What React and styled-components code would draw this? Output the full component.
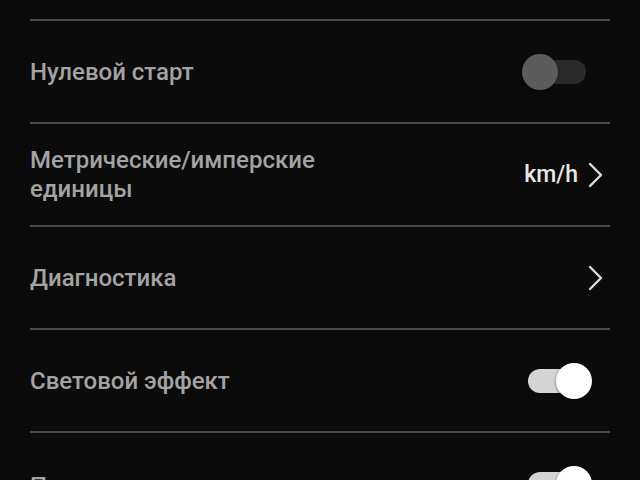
import React from "react";
import styled, { createGlobalStyle } from "styled-components";

const Global = createGlobalStyle`
  html, body { margin: 0; padding: 0; background: #0b0b0b; }
  body { font-family: Roboto, "Noto Sans", sans-serif; overflow: hidden; }
`;

const List = styled.div`
  display: flex;
  flex-direction: column;
  padding: 19px 30px 0;
  height: 480px;
  box-sizing: border-box;
  overflow: hidden;
`;

const Row = styled.div`
  flex: 0 0 auto;
  display: flex;
  align-items: center;
  justify-content: space-between;
  height: 101px;
  border-top: 2px solid #4a4a4a;
  padding-right: ${(p) => p.$pr || 8}px;
`;

const Label = styled.div`
  color: #a3a3a3;
  font-size: 24px;
  font-weight: 500;
  line-height: 29px;
  max-width: 330px;
  padding-top: ${(p) => p.$pt || 1}px;
`;

const Trail = styled.div`
  display: flex;
  align-items: center;
  gap: 9px;
`;

const Value = styled.span`
  color: #e6e6e6;
  font-size: 23px;
  font-weight: 500;
`;

const Track = styled.div`
  position: relative;
  width: 58px;
  height: 24px;
  border-radius: 12px;
  background: ${(p) => (p.$on ? "#d4d4d4" : "#2a2a2a")};
  margin-right: ${(p) => (p.$on ? 6 : 0)}px;
`;

const Thumb = styled.div`
  position: absolute;
  top: -6px;
  ${(p) => (p.$on ? "right: -6px;" : "left: -6px;")}
  width: 36px;
  height: 36px;
  border-radius: 50%;
  background: ${(p) => (p.$on ? "#ffffff" : "#5c5c5c")};
  box-shadow: 0 1px 3px rgba(0,0,0,0.5);
`;

const Toggle = ({ on }) => (
  <Track $on={on}>
    <Thumb $on={on} />
  </Track>
);

const Chevron = () => (
  <svg width="16" height="26" viewBox="0 0 16 26" fill="none">
    <path d="M3 2 L14 13 L3 24" stroke="#dcdcdc" strokeWidth="2.4" strokeLinecap="round" strokeLinejoin="round" />
  </svg>
);

export default function App() {
  return (
    <>
      <Global />
      <List>
        <Row $pr={24}>
          <Label>Нулевой старт</Label>
          <Toggle on={false} />
        </Row>
        <Row $pr={7}>
          <Label>Метрические/имперские единицы</Label>
          <Trail>
            <Value>km/h</Value>
            <Chevron />
          </Trail>
        </Row>
        <Row $pr={7}>
          <Label>Диагностика</Label>
          <Chevron />
        </Row>
        <Row $pr={18}>
          <Label>Световой эффект</Label>
          <Toggle on={true} />
        </Row>
        <Row $pr={18}>
          <Label $pt={6}>Подсветка</Label>
          <Toggle on={true} />
        </Row>
      </List>
    </>
  );
}
